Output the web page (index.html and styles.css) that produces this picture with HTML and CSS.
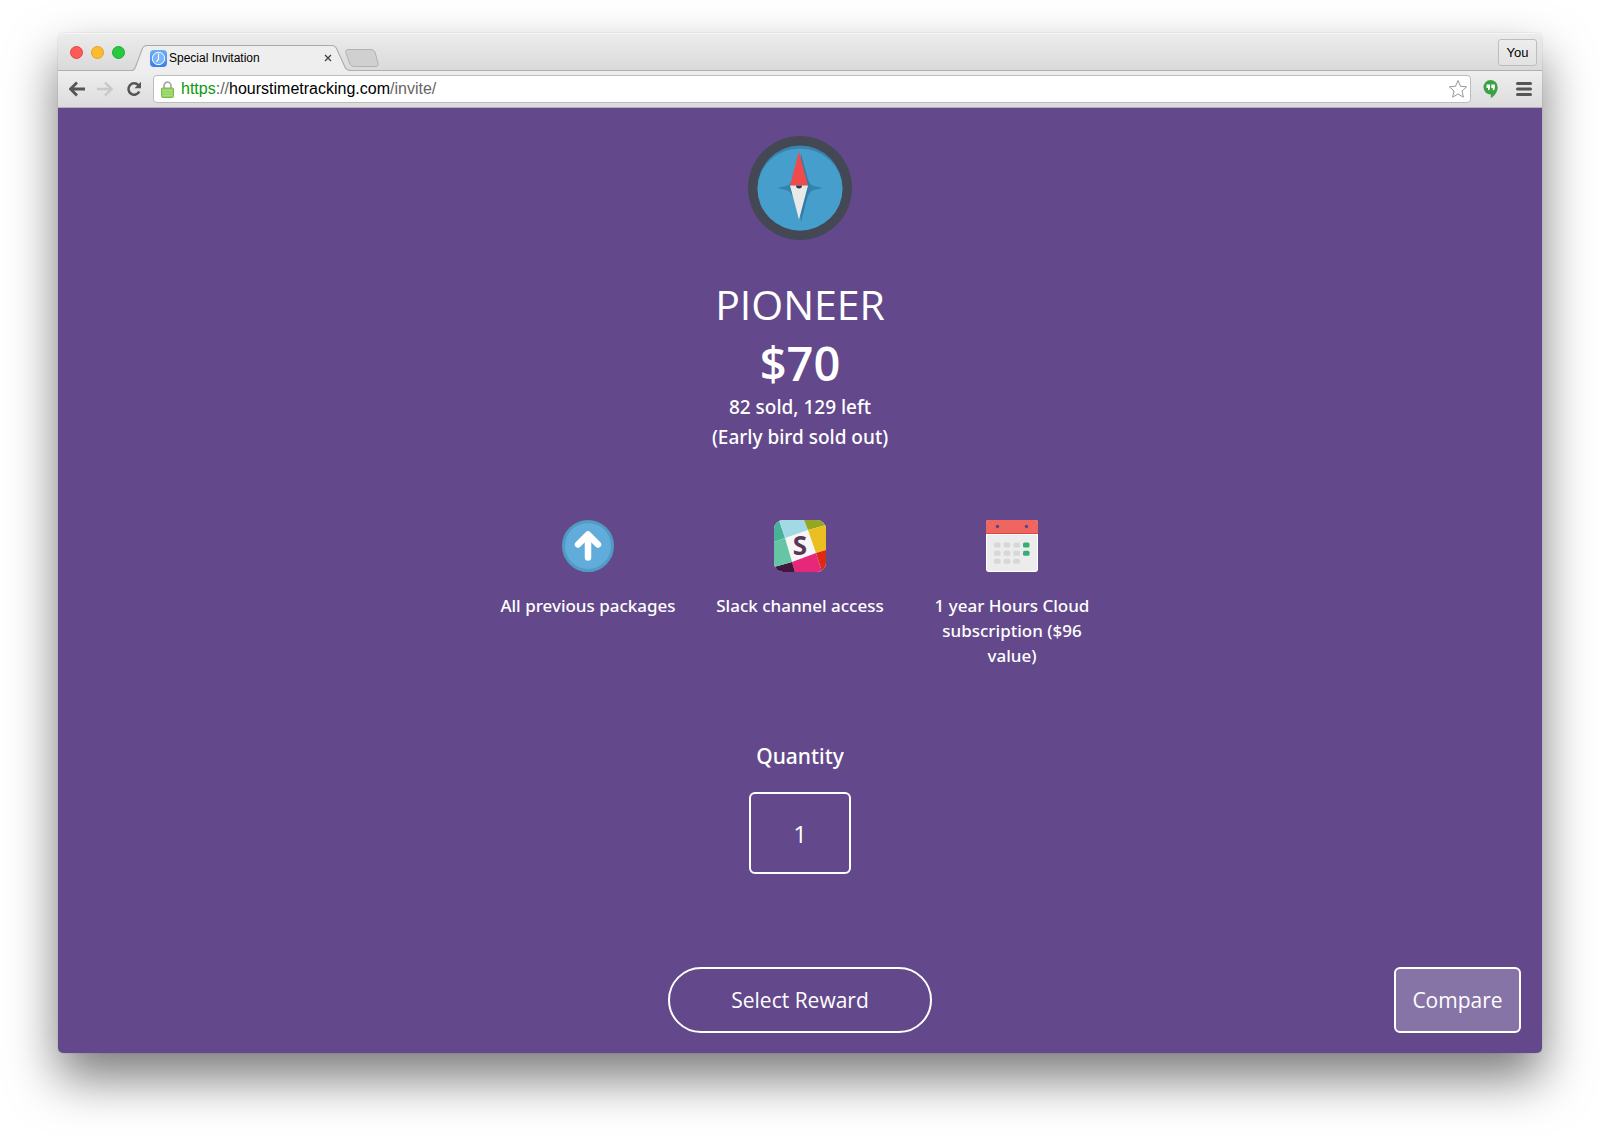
FILE: index.html
```html
<!DOCTYPE html>
<html lang="en">
<head>
    <meta charset="UTF-8">
    <meta name="viewport" content="width=device-width, initial-scale=1.0">
    <title>Special Invitation</title>
    <link rel="stylesheet" href="styles.css">
</head>
<body>
    <div class="window">
        <header class="tab-bar">
            <div class="lights">
                <button class="light red" aria-label="Close window"></button>
                <button class="light yellow" aria-label="Minimize window"></button>
                <button class="light green" aria-label="Zoom window"></button>
            </div>
            <div class="tab">
                <svg class="tab-shape" viewBox="0 0 216 26" preserveAspectRatio="none" aria-hidden="true">
                    <path d="M0 25.5C2 25.5 2.5 24.5 3.5 22L10 4Q11.5 .5 15 .5H197Q200.5 .5 202 4L210 22C211 24.5 212 25.5 216 25.5V26H0Z" fill="#eee"/>
                    <path d="M0 25.5C2 25.5 2.5 24.5 3.5 22L10 4Q11.5 .5 15 .5H197Q200.5 .5 202 4L210 22C211 24.5 212 25.5 216 25.5" fill="none" stroke="#aaa"/>
                </svg>
                <svg class="favicon" viewBox="0 0 17 17" aria-hidden="true">
                    <defs>
                        <linearGradient id="fav" x1="0" y1="0" x2="0" y2="1">
                            <stop offset="0" stop-color="#68b0f8"/>
                            <stop offset="1" stop-color="#3c7be6"/>
                        </linearGradient>
                    </defs>
                    <rect width="17" height="17" rx="4" fill="url(#fav)"/>
                    <circle cx="8.5" cy="8.5" r="6.2" fill="#7ab4f6" stroke="#fff"/>
                    <path d="M8.5 3.5V9L6.5 12" fill="none" stroke="#fff" stroke-width="1.2"/>
                </svg>
                <span class="tab-title">Special Invitation</span>
                <button class="tab-close" aria-label="Close tab">
                    <svg viewBox="0 0 8 8"><path d="M1 1L7 7M7 1L1 7" stroke="#444" stroke-width="1.4"/></svg>
                </button>
            </div>
            <button class="new-tab" aria-label="New tab">
                <svg viewBox="0 0 34 18"><path d="M3 .5H26Q29 .5 30 3L33 14Q33.8 17.5 31 17.5H9Q6 17.5 5 15L.8 3.5Q0 .5 3 .5Z" fill="#d0d0d0" stroke="#b2b2b2"/></svg>
            </button>
            <button class="user">You</button>
        </header>

        <nav class="toolbar">
            <button class="tool" aria-label="Back">
                <svg viewBox="0 0 16 16"><path d="M16 8H2.5M8 1.5L1.5 8L8 14.5" fill="none" stroke="#555" stroke-width="2.8"/></svg>
            </button>
            <button class="tool" aria-label="Forward" disabled>
                <svg viewBox="0 0 16 16"><path d="M0 8H13.5M8 1.5L14.5 8L8 14.5" fill="none" stroke="#c8c8c8" stroke-width="2.4"/></svg>
            </button>
            <button class="tool" aria-label="Reload">
                <svg viewBox="-2 0 16 16"><path d="M11.5 4.3A5.7 5.7 0 1 0 12.3 10.5" fill="none" stroke="#555" stroke-width="2.5"/><path d="M14 .8V7.3H7.5Z" fill="#555"/></svg>
            </button>
            <div class="address">
                <svg class="lock" viewBox="0 0 13 17" aria-hidden="true">
                    <path d="M3 8V5a3.5 3.8 0 0 1 7 0V8" fill="none" stroke="#aaa" stroke-width="1.8"/>
                    <rect x=".5" y="7" width="12" height="9.5" rx="1" fill="#93d364" stroke="#7ab850"/>
                    <path d="M1.5 9.5H11.5M1.5 12H11.5M1.5 14.5H11.5" stroke="#a8df80"/>
                </svg>
                <div class="url" role="textbox" aria-label="Address" contenteditable="true" spellcheck="false"><span class="scheme">https</span><span class="dim">://</span>hourstimetracking.com<span class="dim">/invite/</span></div>
                <button class="star" aria-label="Bookmark this page">
                    <svg viewBox="0 0 20 20"><path d="M10 1.5L12.5 7.3L18.7 7.8L14 12L15.4 18.2L10 15L4.6 18.2L6 12L1.3 7.8L7.5 7.3Z" fill="#fff" stroke="#999" stroke-linejoin="round"/></svg>
                </button>
            </div>
            <button class="tool" aria-label="Hangouts">
                <svg viewBox="0 0 16 20"><path d="M7.5 1A7.2 7.2 0 0 1 14.7 8.2C14.7 13 11.5 17 7.8 19V15.4A7.2 7.2 0 0 1 7.5 1Z" fill="#3ba244"/><path d="M3.5 5.5H7V9Q7 11 5 11.5V9H3.5ZM8.3 5.5H11.8V9Q11.8 11 9.8 11.5V9H8.3Z" fill="#fff"/></svg>
            </button>
            <button class="tool menu" aria-label="Menu">
                <svg viewBox="0 0 16 16"><path d="M1.5 2.5H14.5M1.5 8H14.5M1.5 13.5H14.5" stroke="#555" stroke-width="3" stroke-linecap="round"/></svg>
            </button>
        </nav>

        <main class="page">
            <svg class="compass" viewBox="0 0 104 104" aria-hidden="true">
                <circle cx="52" cy="52" r="52" fill="#444754"/>
                <circle cx="52" cy="52" r="42.5" fill="#3a83ac"/>
                <path d="M9.5 53A42.5 40.5 0 0 1 94.5 53A42.5 41.5 0 0 1 9.5 53Z" fill="#459ecb"/>
                <path d="M52 38Q58 50 74.5 52Q58 54 52 66Q46 54 29.5 52Q46 50 52 38Z" fill="#3583ad"/>
                <circle cx="52" cy="52" r="11" fill="#3583ad"/>
                <path d="M53 18L62 51L53 86L49 50Z" fill="#327ca5"/>
                <path d="M51 15.5L60 49.5H42Z" fill="#ef4b4c"/>
                <path d="M51 83.5L42 49.5H60Z" fill="#e9e9e9"/>
                <path d="M48 49.5H54A3 3 0 0 1 48 49.5Z" fill="#343741"/>
            </svg>

            <h1>PIONEER</h1>
            <p class="price">$70</p>
            <p class="stock">82 sold, 129 left<br>(Early bird sold out)</p>

            <ul class="features">
                <li>
                    <svg class="feature-icon" viewBox="0 0 52 52" aria-hidden="true">
                        <circle cx="26" cy="26" r="24.5" fill="#61acda" stroke="#519bc3" stroke-width="3"/>
                        <path d="M26 37.5V15M16 24.5L26 14.5L36 24.5" fill="none" stroke="#fff" stroke-width="6.5" stroke-linecap="round" stroke-linejoin="round"/>
                    </svg>
                    All previous packages
                </li>
                <li>
                    <svg class="feature-icon" viewBox="0 0 52 52" aria-hidden="true">
                        <defs>
                            <clipPath id="rounded"><rect width="52" height="52" rx="9"/></clipPath>
                        </defs>
                        <g clip-path="url(#rounded)">
                            <rect width="52" height="52" fill="#f7f6f7"/>
                            <path d="M0 0H5L11 18L0 22Z" fill="#49b09b"/>
                            <path d="M5 0H30L34 10L11 18Z" fill="#a3d9e5"/>
                            <path d="M30 0H52V5L34 10Z" fill="#93a722"/>
                            <path d="M52 5V30L42 33L34 10Z" fill="#ecbf20"/>
                            <path d="M52 30V52H48L42 33Z" fill="#dc2a14"/>
                            <path d="M18 42L42 33L48 52H21Z" fill="#e7287a"/>
                            <path d="M0 47L18 42L21 52H0Z" fill="#42163f"/>
                            <path d="M0 22L11 18L18 42L0 47Z" fill="#65c5a5"/>
                            <text class="slack-letter" x="26" y="35" text-anchor="middle">S</text>
                        </g>
                    </svg>
                    Slack channel access
                </li>
                <li>
                    <svg class="feature-icon" viewBox="0 0 52 52" aria-hidden="true">
                        <rect width="52" height="52" rx="3" fill="#fff"/>
                        <rect x="1" y="15" width="50" height="36" rx="2" fill="#ececec"/>
                        <path d="M0 14V3Q0 0 3 0H49Q52 0 52 3V14Z" fill="#ef6560"/>
                        <path d="M0 13.5H52" stroke="#d44a40"/>
                        <circle cx="11.5" cy="6.5" r="1.7" fill="#5a4489"/>
                        <circle cx="40.5" cy="6.5" r="1.7" fill="#5a4489"/>
                        <g fill="#d7d7d7">
                            <rect x="8" y="22.5" width="6.5" height="5" rx="1.5"/>
                            <rect x="17.7" y="22.5" width="6.5" height="5" rx="1.5"/>
                            <rect x="27.4" y="22.5" width="6.5" height="5" rx="1.5"/>
                            <rect x="8" y="30.7" width="6.5" height="5" rx="1.5"/>
                            <rect x="17.7" y="30.7" width="6.5" height="5" rx="1.5"/>
                            <rect x="27.4" y="30.7" width="6.5" height="5" rx="1.5"/>
                            <rect x="8" y="38.7" width="6.5" height="5" rx="1.5"/>
                            <rect x="17.7" y="38.7" width="6.5" height="5" rx="1.5"/>
                            <rect x="27.4" y="38.7" width="6.5" height="5" rx="1.5"/>
                        </g>
                        <rect x="37" y="22.5" width="6.5" height="5" rx="1.5" fill="#35af71"/>
                        <rect x="37" y="30.7" width="6.5" height="5" rx="1.5" fill="#35af71"/>
                    </svg>
                    1 year Hours Cloud subscription ($96 value)
                </li>
            </ul>

            <label class="quantity-label" for="quantity">Quantity</label>
            <input class="quantity" id="quantity" type="text" inputmode="numeric" value="1">

            <div class="actions">
                <button class="select">Select Reward</button>
                <button class="compare">Compare</button>
            </div>
        </main>
    </div>
</body>
</html>
```
FILE: styles.css
```css
* {
    box-sizing: border-box;
}
body {
    margin: 0;
    min-height: 100vh;
    padding: 33px 58px 83px;
    display: flex;
    background-color: #fff;
    font-family: "Open Sans", sans-serif;
}
button {
    padding: 0;
    border: none;
    background: none;
    font: inherit;
    color: inherit;
    cursor: pointer;
}
svg {
    display: block;
}
.window {
    flex: 1;
    display: flex;
    flex-direction: column;
    border-radius: 5px;
    box-shadow: 0 0 1px rgba(0, 0, 0, 0.4), 0 25px 50px rgba(0, 0, 0, 0.52);
}

/* Browser chrome */
.tab-bar {
    display: flex;
    align-items: center;
    height: 38px;
    padding: 2px 5px 0 12px;
    border-bottom: 1px solid #b0b0b0;
    border-radius: 5px 5px 0 0;
    background: linear-gradient(#ececec, #dadada);
    box-shadow: inset 0 1px #f6f6f6;
    font-family: "Liberation Sans", Arial, sans-serif;
    font-size: 12px;
}
.lights {
    display: flex;
    gap: 8px;
}
.light {
    width: 13px;
    height: 13px;
    border-radius: 50%;
}
.red {
    background-color: #fc5b57;
    border: 1px solid #e2463f;
}
.yellow {
    background-color: #fdbc2e;
    border: 1px solid #dfa023;
}
.green {
    background-color: #28c940;
    border: 1px solid #1bac2c;
}
.tab {
    position: relative;
    display: flex;
    align-items: center;
    align-self: flex-end;
    width: 219px;
    height: 26px;
    margin: 0 -6px -1px 7px;
    padding: 0 19px 0 18px;
    color: #000;
}
.tab-shape {
    position: absolute;
    left: 0;
    top: 0;
    width: 100%;
    height: 100%;
}
.favicon,
.tab-title,
.tab-close {
    position: relative;
}
.favicon {
    width: 17px;
    height: 17px;
}
.tab-title {
    flex: 1;
    margin-left: 2px;
}
.tab-close svg {
    width: 8px;
    height: 8px;
}
.new-tab svg {
    width: 34px;
    height: 18px;
}
.new-tab {
    margin-top: 10px;
}
.user {
    width: 39px;
    height: 27px;
    margin-left: auto;
    border: 1px solid #bdbdbd;
    border-radius: 3px;
    background: linear-gradient(#ededed, #e2e2e2);
    font-size: 13px;
    color: #000;
}
.toolbar {
    display: flex;
    align-items: center;
    gap: 12px;
    height: 37px;
    padding: 0 10px 0 11px;
    border-bottom: 1px solid #b4b0ba;
    background: linear-gradient(#eee, #dcdcdc);
}
.tool {
    display: flex;
    justify-content: flex-end;
    width: 16px;
}
.tool svg {
    width: 16px;
    flex: none;
}
.menu {
    width: 21px;
}
.address {
    flex: 1;
    display: flex;
    align-items: center;
    height: 28px;
    padding: 0 2px 0 7px;
    border: 1px solid #bcbcbc;
    border-radius: 4px;
    background-color: #fff;
}
.lock {
    width: 13px;
    height: 17px;
}
.url {
    flex: 1;
    margin-left: 7px;
    font: 16px "Liberation Sans", Arial, sans-serif;
    color: #000;
    outline: none;
}
.scheme {
    color: #0a9a0a;
}
.dim {
    color: #666;
}
.star svg {
    width: 20px;
    height: 20px;
}

/* Reward page */
.page {
    flex: 1;
    display: flex;
    flex-direction: column;
    align-items: center;
    padding: 28px 21px 20px;
    border-radius: 0 0 5px 5px;
    background-color: #63498b;
    color: #fff;
    text-align: center;
}
.compass {
    width: 104px;
    height: 104px;
}
h1 {
    margin: 34px 0 0;
    font-size: 41px;
    font-weight: 400;
    line-height: 60px;
}
.price {
    margin: 0;
    font-size: 47px;
    font-weight: 600;
    line-height: 58px;
}
.stock,
.features,
.quantity-label {
    font-family: "Noto Sans", "Open Sans", sans-serif;
    font-weight: 500;
}
.stock {
    margin: 0;
    font-size: 19px;
    line-height: 30px;
}
.features {
    display: grid;
    grid-template-columns: repeat(3, 212px);
    margin: 68px 0 0;
    padding: 0;
    list-style: none;
    font-size: 17px;
    line-height: 25px;
}
.features li {
    padding: 0 16px;
}
.feature-icon {
    width: 52px;
    height: 52px;
    margin: 0 auto 21px;
}
.slack-letter {
    font-family: "Open Sans", sans-serif;
    font-size: 26px;
    font-weight: 700;
    fill: #5b3559;
}
.quantity-label {
    margin-top: 73px;
    font-size: 21px;
    line-height: 30px;
}
.quantity {
    width: 102px;
    height: 82px;
    margin-top: 21px;
    border: 2px solid #fff;
    border-radius: 6px;
    background: none;
    font: 24px "Open Sans", sans-serif;
    color: #fff;
    text-align: center;
}
.actions {
    display: grid;
    grid-template-columns: 1fr auto 1fr;
    align-self: stretch;
    margin-top: auto;
    font-size: 21px;
    font-weight: 400;
}
.select,
.compare {
    height: 66px;
    border: 2px solid #fff;
}
.select {
    grid-column: 2;
    width: 264px;
    border-radius: 33px;
}
.compare {
    justify-self: end;
    width: 127px;
    border-radius: 6px;
    background-color: #8674a7;
}
```
